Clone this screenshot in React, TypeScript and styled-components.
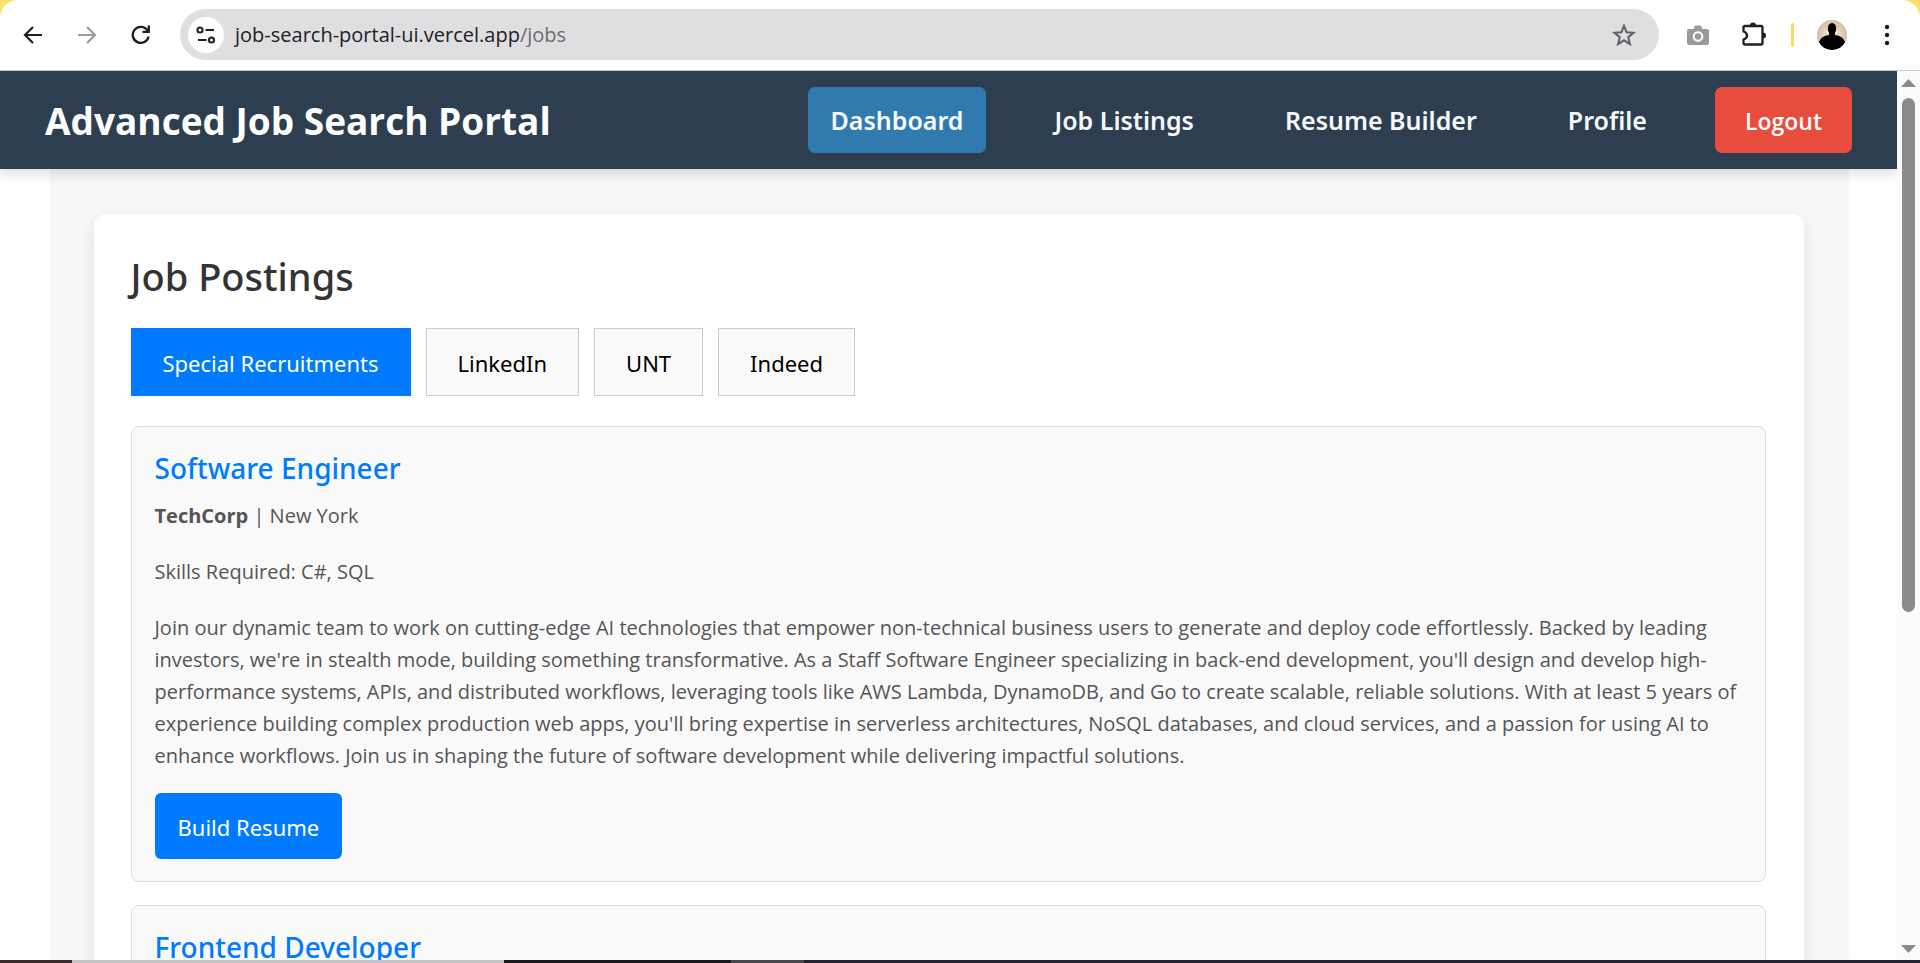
import React from 'react';
import styled, { createGlobalStyle, css } from 'styled-components';

const displayFont = "'Segoe UI', 'Noto Sans', 'Open Sans', sans-serif";
const textFont = "'Segoe UI', 'Open Sans', 'Noto Sans', sans-serif";

const GlobalStyle = createGlobalStyle`
  *, *::before, *::after { box-sizing: border-box; }
  body {
    margin: 0;
    background: #ffffff;
    color: #555555;
    font-family: ${textFont};
  }
  button, input { font-family: inherit; }
  h1, h2, h3, p { margin: 0; }
`;

const Window = styled.div`
  display: flex;
  flex-direction: column;
  height: 100vh;
  overflow: hidden;
`;

const Corners = styled.div`
  flex: none;
  background: #ffe066;
`;

const Toolbar = styled.div`
  display: flex;
  align-items: center;
  height: 71px;
  padding: 0 16px 1px 16px;
  background: #ffffff;
  border-bottom: 1px solid #c0cccf;
  border-radius: 18px 18px 0 0;
`;

const IconButton = styled.button<{ $wide?: boolean }>`
  display: flex;
  align-items: center;
  justify-content: center;
  flex: none;
  width: ${(p) => (p.$wide ? 56 : 54)}px;
  height: 40px;
  padding: 0;
  border: 0;
  background: none;
`;

const NavIcons = styled.div`
  display: flex;
  margin-left: -10px;
  margin-right: 12px;
`;

const AddressBar = styled.div`
  display: flex;
  align-items: center;
  flex: 1;
  height: 51px;
  padding: 0 8px;
  border-radius: 26px;
  background: #dfdfe1;
`;

const SiteInfo = styled.button`
  display: flex;
  align-items: center;
  justify-content: center;
  width: 36px;
  height: 36px;
  padding: 0;
  border: 0;
  border-radius: 50%;
  background: #ffffff;
`;

const Url = styled.div`
  flex: 1;
  margin-left: 11px;
  font-size: 20px;
  line-height: 28px;
  color: #202124;
  span { color: #6a6c70; }
`;

const Tools = styled.div`
  display: flex;
  align-items: center;
  margin-left: 11px;
  margin-right: -10px;
`;

const Divider = styled.span`
  width: 3px;
  height: 24px;
  margin: 0 10px 0 9px;
  border-radius: 2px;
  background: #f5de61;
`;

const Viewport = styled.div`
  display: flex;
  flex: 1;
  min-height: 0;
`;

const Page = styled.div`
  flex: 1;
  min-width: 0;
  overflow: hidden;
`;

const Header = styled.header`
  position: relative;
  display: flex;
  align-items: center;
  justify-content: space-between;
  height: 98px;
  padding: 0 45px;
  background: #2d3e50;
  box-shadow: 0 4px 12px rgba(0, 0, 0, 0.15);
`;

const Brand = styled.h1`
  padding-top: 2px;
  font-size: 37px;
  line-height: 50px;
  font-weight: 700;
  color: #ffffff;
`;

const Nav = styled.nav`
  display: flex;
  align-items: center;
  gap: 45px;
`;

const NavLink = styled.a<{ $active?: boolean }>`
  height: 66px;
  padding: 0 23px;
  border-radius: 7px;
  font-family: ${displayFont};
  font-size: 25px;
  line-height: 66px;
  font-weight: 600;
  color: #f5f9fc;
  text-decoration: none;
  ${(p) => p.$active && css`background: #317aae;`}
`;

const Logout = styled.button`
  height: 66px;
  padding: 2px 30px 0;
  border: 0;
  border-radius: 7px;
  background: #e84c3d;
  font-size: 23px;
  font-weight: 600;
  color: #ffffff;
`;

const Container = styled.main`
  max-width: 1800px;
  margin: 0 auto;
  padding: 45px;
  background: #f7f8fa;
`;

const Panel = styled.section`
  padding: 37px 38px 37px 37px;
  border-radius: 12px;
  background: #ffffff;
  box-shadow: 0 6px 18px rgba(0, 0, 0, 0.1);
`;

const PanelTitle = styled.h2`
  margin-bottom: 27px;
  font-family: ${displayFont};
  font-size: 38px;
  line-height: 50px;
  font-weight: 500;
  color: #333333;
`;

const Tabs = styled.div`
  display: flex;
  gap: 15px;
  margin-bottom: 30px;
`;

const Tab = styled.button<{ $active?: boolean }>`
  height: 68px;
  padding: 2px 31px 0;
  border: 1px solid ${(p) => (p.$active ? '#007bff' : '#cccccc')};
  background: ${(p) => (p.$active ? '#007bff' : '#f9f9f9')};
  font-family: ${displayFont};
  font-size: 22px;
  color: ${(p) => (p.$active ? '#ffffff' : '#000000')};
`;

const JobList = styled.div`
  display: flex;
  flex-direction: column;
  gap: 23px;
`;

const JobCard = styled.article`
  padding: 22px 22px 22px 23px;
  border: 1px solid #dddddd;
  border-radius: 8px;
  background: #f9f9f9;
`;

const JobTitle = styled.h3`
  margin-bottom: 13px;
  font-family: ${displayFont};
  font-size: 28px;
  line-height: 38px;
  font-weight: 500;
  color: #007bff;
`;

const JobText = styled.p`
  margin-bottom: 24px;
  font-size: 20px;
  line-height: 32px;
  color: #555555;
`;

const Description = styled(JobText)`
  margin-bottom: 21px;
`;

const BuildButton = styled.button`
  height: 66px;
  padding: 2px 23px 0;
  border: 0;
  border-radius: 6px;
  background: #007bff;
  font-family: ${displayFont};
  font-size: 22px;
  color: #ffffff;
`;

const ScrollTrack = styled.div`
  display: flex;
  flex-direction: column;
  align-items: center;
  justify-content: space-between;
  width: 23px;
  padding: 8px 0 7px;
  background: #fbfbfb;
`;

const ScrollBody = styled.div`
  flex: 1;
  width: 13px;
  padding: 11px 0;
`;

const ScrollThumb = styled.div`
  height: 61.5%;
  border-radius: 7px;
  background: #8b8b8b;
`;

const Taskbar = styled.div`
  display: flex;
  flex: none;
  height: 3px;
  background: #23222f;
`;

const TaskSegment = styled.span<{ $share: number; $tone: string }>`
  flex: ${(p) => p.$share} 1 0;
  background: ${(p) => p.$tone};
`;

const jobs = [
  {
    title: 'Software Engineer',
    company: 'TechCorp',
    location: 'New York',
    skills: 'C#, SQL',
    description:
      "Join our dynamic team to work on cutting-edge AI technologies that empower non-technical business users to generate and deploy code effortlessly. Backed by leading investors, we're in stealth mode, building something transformative. As a Staff Software Engineer specializing in back-end development, you'll design and develop high-performance systems, APIs, and distributed workflows, leveraging tools like AWS Lambda, DynamoDB, and Go to create scalable, reliable solutions. With at least 5 years of experience building complex production web apps, you'll bring expertise in serverless architectures, NoSQL databases, and cloud services, and a passion for using AI to enhance workflows. Join us in shaping the future of software development while delivering impactful solutions.",
  },
  { title: 'Frontend Developer' },
];

const segments = [
  { share: 72, tone: '#3a2b2c' },
  { share: 432, tone: '#c4c4c4' },
  { share: 227, tone: '#18191c' },
  { share: 73, tone: '#47484b' },
  { share: 1116, tone: '#23222f' },
];

const Arrow = ({ flip, color }: { flip?: boolean; color: string }) => (
  <svg width="20" height="20" viewBox="0 0 20 20" fill="none" stroke={color} strokeWidth="2.2">
    <path d={flip ? 'M1 10H18M10 2L18 10L10 18' : 'M19 10H2M10 2L2 10L10 18'} />
  </svg>
);

export default function App() {
  return (
    <>
      <GlobalStyle />
      <Window>
        <Corners>
          <Toolbar>
            <NavIcons>
              <IconButton aria-label="Back"><Arrow color="#1f1f1f" /></IconButton>
              <IconButton aria-label="Forward"><Arrow flip color="#9b9b9b" /></IconButton>
              <IconButton aria-label="Reload">
                <svg width="20" height="20" viewBox="0 0 20 20" fill="none" stroke="#1f1f1f" strokeWidth="2.3">
                  <path d="M17.6 11.5A8 8 0 1 1 15.8 4.6L17.8 6.8" />
                  <path d="M17.8 0.5V6.8H11.5" />
                </svg>
              </IconButton>
            </NavIcons>
            <AddressBar>
              <SiteInfo aria-label="Site information">
                <svg width="20" height="20" viewBox="0 0 20 20" fill="none" stroke="#1f1f1f" strokeWidth="2">
                  <circle cx="4" cy="5" r="2.6" />
                  <path d="M9.5 5H18M2 15H10.5" />
                  <circle cx="15.5" cy="15" r="2.6" />
                </svg>
              </SiteInfo>
              <Url>job-search-portal-ui.vercel.app<span>/jobs</span></Url>
              <IconButton aria-label="Bookmark">
                <svg width="24" height="24" viewBox="0 0 24 24" fill="none" stroke="#5f6063" strokeWidth="2">
                  <path d="M12 2.8L14.6 9.2L21.5 9.7L16.2 14.2L17.9 21L12 17.3L6.1 21L7.8 14.2L2.5 9.7L9.4 9.2Z" />
                </svg>
              </IconButton>
            </AddressBar>
            <Tools>
              <IconButton $wide aria-label="Screenshot">
                <svg width="22" height="20" viewBox="0 0 22 20">
                  <path fill="#9a9a9a" d="M2 4H6.5L8 0.5H14L15.5 4H20Q22 4 22 6V18Q22 20 20 20H2Q0 20 0 18V6Q0 4 2 4Z" />
                  <circle cx="11" cy="11.5" r="4.3" fill="#9a9a9a" stroke="#ffffff" strokeWidth="2" />
                </svg>
              </IconButton>
              <IconButton $wide aria-label="Extensions">
                <svg width="26" height="26" viewBox="0 0 26 26">
                  <path fill="none" stroke="#1f1f1f" strokeWidth="2.3" strokeLinejoin="round" d="M4 4H20Q21.5 4 21.5 5.5V21Q21.5 22.5 20 22.5H4Q2.5 22.5 2.5 21V17.5Q6 16.500 6 13.500Q6 10.500 2.500 9.500V5.500Q2.500 4 4 4Z" />
                  <path fill="#1f1f1f" d="M9 3.5A3 3 0 0 1 15 3.5ZM22 10.5A3 3 0 0 1 22 16.5Z" />
                </svg>
              </IconButton>
              <Divider />
              <IconButton $wide aria-label="Account">
                <svg width="30" height="30" viewBox="0 0 30 30">
                  <defs>
                    <clipPath id="avatar"><circle cx="15" cy="15" r="15" /></clipPath>
                    <radialGradient id="glow"><stop offset="0" stopColor="#fff4e0" /><stop offset="1" stopColor="#d1bda0" /></radialGradient>
                  </defs>
                  <g clipPath="url(#avatar)">
                    <rect width="30" height="30" fill="url(#glow)" />
                    <ellipse cx="15" cy="8.5" rx="4.2" ry="5.5" fill="#000000" />
                    <path d="M12 12H18V15Q26 16 28 22L24 30H6L2 22Q4 16 12 15Z" fill="#000000" />
                  </g>
                </svg>
              </IconButton>
              <IconButton aria-label="Menu">
                <svg width="6" height="22" viewBox="0 0 6 22" fill="#1f1f1f">
                  <circle cx="3" cy="3" r="2.2" /><circle cx="3" cy="11" r="2.2" /><circle cx="3" cy="19" r="2.2" />
                </svg>
              </IconButton>
            </Tools>
          </Toolbar>
        </Corners>
        <Viewport>
          <Page>
            <Header>
              <Brand>Advanced Job Search Portal</Brand>
              <Nav>
                <NavLink href="#dashboard" $active>Dashboard</NavLink>
                <NavLink href="#jobs">Job Listings</NavLink>
                <NavLink href="#resume">Resume Builder</NavLink>
                <NavLink href="#profile">Profile</NavLink>
                <Logout>Logout</Logout>
              </Nav>
            </Header>
            <Container>
              <Panel>
                <PanelTitle>Job Postings</PanelTitle>
                <Tabs>
                  <Tab $active>Special Recruitments</Tab>
                  <Tab>LinkedIn</Tab>
                  <Tab>UNT</Tab>
                  <Tab>Indeed</Tab>
                </Tabs>
                <JobList>
                  {jobs.map((job) => (
                    <JobCard key={job.title}>
                      <JobTitle>{job.title}</JobTitle>
                      {job.company && <JobText><strong>{job.company}</strong> | {job.location}</JobText>}
                      {job.skills && <JobText>Skills Required: {job.skills}</JobText>}
                      {job.description && <Description>{job.description}</Description>}
                      {job.description && <BuildButton>Build Resume</BuildButton>}
                    </JobCard>
                  ))}
                </JobList>
              </Panel>
            </Container>
          </Page>
          <ScrollTrack>
            <svg width="15" height="8" viewBox="0 0 15 8"><path d="M0 8L7.5 0L15 8Z" fill="#8b8b8b" /></svg>
            <ScrollBody><ScrollThumb /></ScrollBody>
            <svg width="15" height="8" viewBox="0 0 15 8"><path d="M0 0L7.5 8L15 0Z" fill="#8b8b8b" /></svg>
          </ScrollTrack>
        </Viewport>
        <Taskbar>
          {segments.map((s) => <TaskSegment key={s.tone} $share={s.share} $tone={s.tone} />)}
        </Taskbar>
      </Window>
    </>
  );
}
